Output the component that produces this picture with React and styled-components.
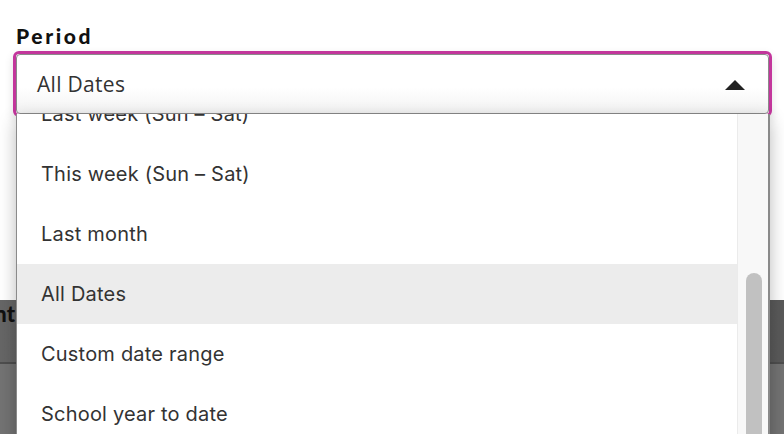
import React from "react";
import styled, { createGlobalStyle } from "styled-components";

const options = [
  "Yesterday",
  "Last week (Sun – Sat)",
  "This week (Sun – Sat)",
  "Last month",
  "All Dates",
  "Custom date range",
  "School year to date",
];

const selected = "All Dates";

const App = () => {
  return (
    <Page>
      <GlobalStyle />
      <Field>
        <Label>Period</Label>
        <Ring>
          <SelectBox>
            <Value>{selected}</Value>
            <Caret viewBox="0 0 20 10" aria-hidden="true">
              <path d="M0 10 L10 0 L20 10 Z" fill="#222" />
            </Caret>
          </SelectBox>
          <Menu>
            <List>
              {options.map((opt) => (
                <Option key={opt} active={opt === selected}>
                  {opt}
                </Option>
              ))}
            </List>
            <Track>
              <Thumb />
            </Track>
          </Menu>
        </Ring>
      </Field>

      <Backdrop>
        <BackdropHead>
          <HeadCell>
            <HeadText>Student</HeadText>
          </HeadCell>
        </BackdropHead>
        <BackdropBody />
      </Backdrop>
    </Page>
  );
};

const GlobalStyle = createGlobalStyle`
  html, body {
    margin: 0;
    padding: 0;
    background: #ffffff;
  }
  body {
    font-family: "Inter", "Liberation Sans", sans-serif;
    overflow: hidden;
  }
`;

const Page = styled.div`
  width: 784px;
  height: 434px;
  display: flex;
  flex-direction: column;
  overflow: hidden;
  background: #ffffff;
`;

const Field = styled.div`
  padding: 23px 12px 0 13px;
  display: flex;
  flex-direction: column;
  position: relative;
  z-index: 2;
`;

const Label = styled.div`
  padding-left: 3px;
  font-family: "Lato", "Liberation Sans", sans-serif;
  font-weight: 900;
  font-size: 21px;
  letter-spacing: 2.6px;
  color: #111;
  line-height: 25px;
  margin-bottom: 3px;
`;

const Ring = styled.div`
  position: relative;
  border: 3px solid #c3369c;
  border-radius: 6px;
  box-shadow: 0 4px 10px rgba(0, 0, 0, 0.12);
`;

const SelectBox = styled.div`
  height: 58px;
  border: 1px solid #8a8a8a;
  border-radius: 4px;
  background: linear-gradient(#ffffff 55%, #f2f2f2);
  display: flex;
  align-items: center;
  justify-content: space-between;
  padding: 0 23px 0 20px;
`;

const Value = styled.span`
  font-family: "Open Sans", "Liberation Sans", sans-serif;
  font-size: 21px;
  letter-spacing: 0.3px;
  color: #333;
`;

const Caret = styled.svg`
  width: 20px;
  height: 10px;
  margin-top: 1px;
`;

const Menu = styled.div`
  position: absolute;
  top: 60px;
  left: 0;
  right: -1px;
  height: 330px;
  display: flex;
  background: #ffffff;
  border-left: 1px solid #8a8a8a;
  border-right: 2px solid #8a8a8a;
  box-shadow: 0 6px 16px rgba(0, 0, 0, 0.28);
  overflow: hidden;
`;

const List = styled.div`
  flex: 1;
  display: flex;
  flex-direction: column;
  margin-top: -90px;
`;

const Option = styled.div`
  flex: none;
  height: 60px;
  display: flex;
  align-items: center;
  padding-left: 24px;
  font-family: "Inter", "Liberation Sans", sans-serif;
  font-size: 20px;
  letter-spacing: 0.2px;
  color: #333;
  background: ${(p) => (p.active ? "#ececec" : "#ffffff")};
`;

const Track = styled.div`
  width: 30px;
  background: #f8f8f8;
  border-left: 1px solid #ebebeb;
  display: flex;
  justify-content: center;
  padding-top: 159px;
`;

const Thumb = styled.div`
  width: 16px;
  height: 200px;
  background: #c1c1c1;
  border-radius: 8px 8px 0 0;
  margin-left: 1px;
`;

const Backdrop = styled.div`
  margin-top: 183px;
  flex: 1;
  display: flex;
  flex-direction: column;
  background: #6a6a6a;
`;

const BackdropHead = styled.div`
  height: 62px;
  border-bottom: 2px solid #4e4e4e;
  background: linear-gradient(90deg, #666 0%, #5a5a5a 100%);
  display: flex;
  align-items: flex-start;
`;

const HeadCell = styled.div`
  width: 15px;
  overflow: hidden;
  display: flex;
  justify-content: flex-end;
`;

const HeadText = styled.span`
  font-family: "Lato", "Liberation Sans", sans-serif;
  font-weight: 900;
  font-size: 22px;
  color: #111;
  white-space: nowrap;
`;

const BackdropBody = styled.div`
  flex: 1;
  background: #737373;
`;

export default App;
